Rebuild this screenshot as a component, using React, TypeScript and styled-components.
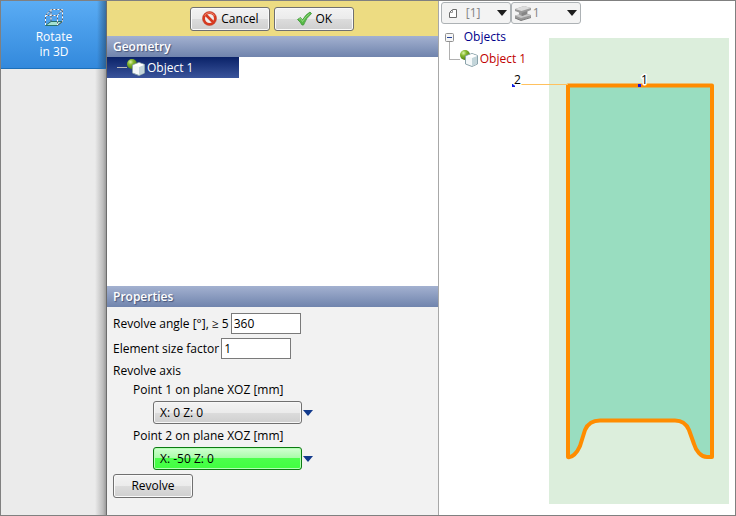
import React, { useState } from "react";
import styled, { createGlobalStyle, css } from "styled-components";

const GlobalStyle = createGlobalStyle`
  * { box-sizing: border-box; }
  body { margin: 0; }
  body, button, input, select {
    font-family: "Segoe UI", "Open Sans", sans-serif;
    font-size: 12px;
    line-height: 16px;
    color: #000;
  }
`;

const Window = styled.div`
  display: grid;
  grid-template-columns: 106px minmax(300px, 45.2%) minmax(0, 1fr);
  min-height: 100vh;
  border: 1px solid #808080;
`;

const Sidebar = styled.nav`
  background: linear-gradient(to left, #8f8f8f, #bcbcbc 4px, #ebebeb 12px);
`;

const ModeButton = styled.button`
  display: flex;
  flex-direction: column;
  align-items: center;
  width: 100%;
  height: 68px;
  padding: 6px 0 0;
  border: 0;
  border-bottom: 1px solid #1d6fb8;
  background: linear-gradient(to left, rgba(30, 60, 90, 0.6), rgba(30, 60, 90, 0) 10px),
    linear-gradient(#5aacf4, #3389dc);
  color: #fff;
  line-height: 15px;
  gap: 2px;
`;

const Panel = styled.main`
  display: flex;
  flex-direction: column;
  border-left: 1px solid #6c6c6c;
  border-right: 1px solid #a8a8a8;
  margin-left: -1px;
  background: #f2f2f2;
`;

const ActionBar = styled.div`
  display: flex;
  justify-content: center;
  align-items: center;
  gap: 4px;
  height: 35px;
  background: #eddc82;
`;

const PushButton = styled.button`
  display: inline-flex;
  align-items: center;
  justify-content: center;
  gap: 4px;
  width: 80px;
  height: 24px;
  padding: 0;
  border: 1px solid #707070;
  border-radius: 3px;
  background: linear-gradient(#f3f3f3, #ebebeb 50%, #dcdcdc 50%, #cfcfcf);
  box-shadow: inset 0 0 0 1px #fafafa;
`;

const SectionTitle = styled.h2`
  height: 21px;
  margin: 0;
  padding: 0 6px;
  background: linear-gradient(#a3b1d0, #7084ad);
  color: #fff;
  font-size: 12px;
  font-weight: 600;
  line-height: 21px;
  text-shadow: 1px 1px 1px #46557a;
`;

const GeometryList = styled.ul`
  flex: 1 0 160px;
  margin: 0;
  padding: 0;
  list-style: none;
  background: #fff;
`;

const GeometryItem = styled.li`
  display: flex;
  align-items: center;
  width: 40%;
  height: 21px;
  padding-left: 10px;
  background: linear-gradient(#0a2268, #3a549b);
  color: #fff;
  white-space: nowrap;
  &::before {
    content: "";
    width: 10px;
    height: 1px;
    background: #b9b9b9;
  }
`;

const Form = styled.form`
  display: flex;
  flex-direction: column;
  align-items: flex-start;
  gap: 4px;
  padding: 6px 6px 17px;
  white-space: nowrap;
`;

const Field = styled.label`
  display: flex;
  align-items: center;
  gap: 2px;
`;

const NumberInput = styled.input`
  width: 70px;
  height: 21px;
  padding: 0 2px;
  border: 1px solid #7a7a7a;
  background: #fff;
`;

const AxisGroup = styled.fieldset`
  display: flex;
  flex-direction: column;
  min-width: 0;
  margin: 0;
  padding: 0;
  border: 0;
`;

const AxisLegend = styled.legend`
  padding: 0;
  height: 19px;
  line-height: 16px;
`;

const PointLabel = styled.span`
  display: block;
  height: 19px;
  padding-left: 20px;
  line-height: 16px;
`;

const PointRow = styled.div`
  display: flex;
  align-items: center;
  gap: 1px;
  padding-left: 40px;
  margin-bottom: 4px;
  &:last-child { margin-bottom: 0; }
`;

const PointButton = styled.button<{ $active?: boolean }>`
  width: 149px;
  height: 23px;
  padding: 0 6px;
  border: 1px solid #707070;
  border-radius: 3px;
  background: linear-gradient(#f3f3f3, #ebebeb 50%, #dcdcdc 50%, #cfcfcf);
  box-shadow: inset 0 0 0 1px #f7f7f7;
  text-align: left;
  ${(p) =>
    p.$active &&
    css`
      border-color: #0c7a12;
      background: linear-gradient(#d2ffd2, #a9fca9 46%, #4dff4d 46%, #40ff40);
      box-shadow: inset 0 0 0 1px #b4ffb4;
    `}
`;

const ArrowButton = styled.button`
  display: flex;
  padding: 0;
  border: 0;
  background: none;
`;

const Viewer = styled.section`
  position: relative;
  background: #fff;
`;

const Canvas = styled.svg`
  position: absolute;
  inset: 0;
  width: 100%;
  height: 100%;
`;

const Overlay = styled.div`
  position: relative;
  padding: 1px 2px;
`;

const PickerBar = styled.div`
  display: flex;
`;

const Picker = styled.label`
  display: flex;
  align-items: center;
  width: 70px;
  height: 22px;
  padding: 0 3px;
  border: 1px solid #adb2b5;
  border-radius: 3px;
  background: #f3f3f3;
`;

const PickerSelect = styled.select<{ $indent: number }>`
  flex: 1;
  min-width: 0;
  height: 20px;
  padding: 0 0 0 ${(p) => p.$indent}px;
  border: 0;
  appearance: none;
  background: transparent;
  color: #838383;
`;

const Tree = styled.ul`
  margin: 0;
  padding: 2px 0 0 4px;
  list-style: none;
`;

const TreeRoot = styled.div`
  display: flex;
  align-items: center;
  gap: 10px;
  height: 22px;
  color: #00008b;
`;

const Toggle = styled.button`
  display: flex;
  width: 9px;
  height: 9px;
  padding: 0;
  border: 0;
  background: none;
`;

const TreeChildren = styled.ul`
  margin: 0;
  padding: 0 0 0 4px;
  list-style: none;
`;

const TreeLeaf = styled.li`
  display: flex;
  align-items: center;
  height: 22px;
  color: #c00000;
  &::before {
    content: "";
    align-self: flex-start;
    width: 10px;
    height: 17px;
    margin-top: -6px;
    border: solid #b0b0b0;
    border-width: 0 0 1px 1px;
  }
`;

const CubeIcon = () => (
  <svg width="20" height="18" viewBox="0 0 20 18" aria-hidden="true">
    <defs>
      <radialGradient id="ball" cx="35%" cy="30%" r="70%">
        <stop offset="0" stopColor="#e0f5b0" />
        <stop offset="0.4" stopColor="#86b92f" />
        <stop offset="1" stopColor="#4c7c12" />
      </radialGradient>
    </defs>
    <circle cx="5" cy="5" r="5" fill="url(#ball)" />
    <path d="M5.500 6 12 3.500l5.500 2v8.500l-5.500 2.500-6.500-2.500z" fill="#f4f8f9" stroke="#8ba3ab" />
    <path d="M12 8 17 6v8L12 16z" fill="#c3d5da" />
    <path d="M6 6.200l6-2.200L17 5.800l-5 2z" fill="#fff" />
  </svg>
);

const WireIcon = () => (
  <svg width="20" height="20" viewBox="0 0 20 20" fill="none" aria-hidden="true">
    <path d="M1.500 18.500 7 14.500h11.500l-5 4z" fill="#a5e2d1" stroke="#28716c" />
    <path d="M1.500 18V8.500L7 2.500h11.500v12l-5 4M1.500 8.500h12v9.500M13.500 8.500l5-6M7 2.500v12" stroke="#5d6370" />
    <path
      d="M1.500 18V8.500L7 2.500h11.500v12M1.500 8.500h12v9.500M13.500 8.500l5-6M7 2.500v12"
      stroke="#fff"
      strokeDasharray="2 2"
    />
  </svg>
);

const CancelIcon = () => (
  <svg width="15" height="15" viewBox="0 0 15 15" aria-hidden="true">
    <circle cx="7.500" cy="7.500" r="7" fill="#d83a20" stroke="#b63620" strokeWidth="0.500" />
    <circle cx="7.500" cy="7.500" r="4.500" fill="#eee" />
    <path d="M4 4l7 7" stroke="#d83a20" strokeWidth="2.600" />
    <path d="M2.500 4.500a6 6 0 0 1 10 0" fill="none" stroke="#f08b75" />
  </svg>
);

const CheckIcon = () => (
  <svg width="15" height="15" viewBox="0 0 15 15" aria-hidden="true">
    <path d="M0.500 8.500 3.500 6.500 5.500 9Q8.500 3.500 13 1L14.500 2.500Q9 7 6.500 14H5Q3.500 11 0.500 8.500z" fill="#58b947" stroke="#3c9636" strokeWidth="0.800" />
    <path d="M2 8.300 3.500 7.300 5.500 10.500Q8.500 5.500 12.500 2.800" fill="none" stroke="#a0df8d" strokeWidth="0.800" />
  </svg>
);

const SheetIcon = () => (
  <svg width="16" height="12" viewBox="0 0 16 12" fill="none" aria-hidden="true">
    <path d="M4.500 10.500h7v-8H7.500L4.500 5.500z" fill="#fff" stroke="#6c6c6c" />
    <path d="M7.500 2.500v3h-3" stroke="#999" />
  </svg>
);

const BeamIcon = () => (
  <svg width="16" height="16" viewBox="0 0 16 16" aria-hidden="true">
    <path d="M0 4 9 1l7 2v2l-3.500 1.500v2.500l3.500 1v2L6 15.500 0 13v-2.500l4-1V7.500L0 6z" fill="#9a9a9a" />
    <path d="M0 4 9 1l7 2-9.500 3z" fill="#dcdcdc" />
    <path d="M0 10.500 4 9.500l3 1.500 5-1.800 4 1L6 13z" fill="#c7c7c7" />
    <path d="M6.500 8 12 6.300v2.700L7 11z" fill="#858585" />
    <path d="M0 13l6 2.500 10-3" fill="none" stroke="#777" />
  </svg>
);

const DownArrow = ({ color }: { color: string }) => (
  <svg width="10" height="6" viewBox="0 0 10 6" aria-hidden="true">
    <path d="M0 0h10L5 6z" fill={color} />
  </svg>
);

const ModelDrawing = () => (
  <Canvas viewBox="0 0 296 514" preserveAspectRatio="xMinYMin meet" role="img" aria-label="Profile of Object 1">
    <rect x="110" y="37" width="180" height="466" fill="#dceedc" />
    <path
      d="M129 84.500H273V456H268C262 456 257 450 255 443L250 429Q246 419.500 236 419.500H161Q150 419.500 146 429L141 445C138 452 133 457 129 456Z"
      fill="#99ddc0"
      stroke="#ff8c00"
      strokeWidth="4"
      strokeLinejoin="round"
    />
    <path d="M75 83.500H129" stroke="#ffc15e" />
    <rect x="73" y="83" width="3" height="3" fill="#1414dc" />
    <rect x="199" y="83" width="3" height="3" fill="#1414dc" />
    <g fontSize="12" stroke="#fff" strokeWidth="3" paintOrder="stroke" strokeLinejoin="round">
      <text x="75" y="83">2</text>
      <text x="202" y="83">1</text>
    </g>
  </Canvas>
);

export default function App() {
  const [open, setOpen] = useState(true);
  return (
    <>
      <GlobalStyle />
      <Window>
        <Sidebar>
          <ModeButton type="button">
            <WireIcon />
            <span>
              Rotate
              <br />
              in 3D
            </span>
          </ModeButton>
        </Sidebar>

        <Panel>
          <ActionBar>
            <PushButton type="button">
              <CancelIcon />
              Cancel
            </PushButton>
            <PushButton type="button">
              <CheckIcon />
              OK
            </PushButton>
          </ActionBar>
          <SectionTitle>Geometry</SectionTitle>
          <GeometryList>
            <GeometryItem>
              <CubeIcon />
              Object 1
            </GeometryItem>
          </GeometryList>
          <SectionTitle>Properties</SectionTitle>
          <Form onSubmit={(e) => e.preventDefault()}>
            <Field>
              Revolve angle [°], ≥ 5
              <NumberInput defaultValue="360" />
            </Field>
            <Field>
              Element size factor
              <NumberInput defaultValue="1" />
            </Field>
            <AxisGroup>
              <AxisLegend>Revolve axis</AxisLegend>
              <PointLabel id="point-1">Point 1 on plane XOZ [mm]</PointLabel>
              <PointRow>
                <PointButton type="button" aria-describedby="point-1">X: 0 Z: 0</PointButton>
                <ArrowButton type="button" aria-label="Point 1 options">
                  <DownArrow color="#123a8c" />
                </ArrowButton>
              </PointRow>
              <PointLabel id="point-2">Point 2 on plane XOZ [mm]</PointLabel>
              <PointRow>
                <PointButton type="button" $active aria-describedby="point-2">X: -50 Z: 0</PointButton>
                <ArrowButton type="button" aria-label="Point 2 options">
                  <DownArrow color="#123a8c" />
                </ArrowButton>
              </PointRow>
            </AxisGroup>
            <PushButton type="submit">Revolve</PushButton>
          </Form>
        </Panel>

        <Viewer>
          <ModelDrawing />
          <Overlay>
            <PickerBar>
              <Picker>
                <SheetIcon />
                <PickerSelect $indent={5} aria-label="Sheet">
                  <option>[1]</option>
                </PickerSelect>
                <DownArrow color="#1c1c1c" />
              </Picker>
              <Picker>
                <BeamIcon />
                <PickerSelect $indent={2} aria-label="Section">
                  <option>1</option>
                </PickerSelect>
                <DownArrow color="#1c1c1c" />
              </Picker>
            </PickerBar>
            <Tree>
              <li>
                <TreeRoot>
                  <Toggle type="button" aria-label="Toggle objects" aria-expanded={open} onClick={() => setOpen(!open)}>
                    <svg width="9" height="9" viewBox="0 0 9 9" aria-hidden="true">
                      <rect x="0.500" y="0.500" width="8" height="8" rx="1" fill="#f6f6f6" stroke="#919191" />
                      <path d="M2 4.500h5" stroke="#24439a" />
                    </svg>
                  </Toggle>
                  Objects
                </TreeRoot>
                {open && (
                  <TreeChildren>
                    <TreeLeaf>
                      <CubeIcon />
                      Object 1
                    </TreeLeaf>
                  </TreeChildren>
                )}
              </li>
            </Tree>
          </Overlay>
        </Viewer>
      </Window>
    </>
  );
}
